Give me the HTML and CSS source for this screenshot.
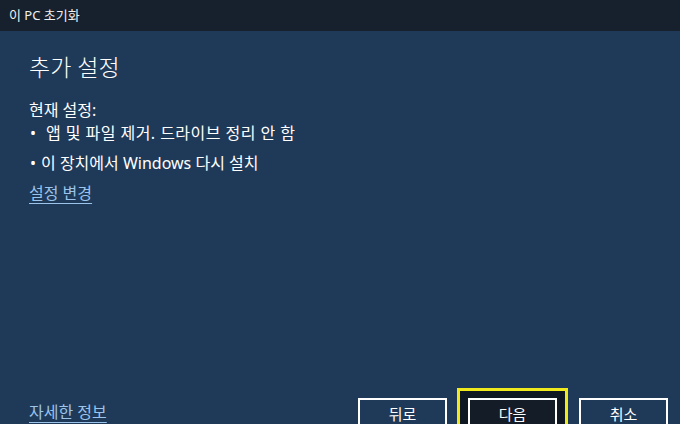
FILE: index.html
```html
<!DOCTYPE html>
<html lang="ko">
<head>
<meta charset="utf-8">
<title>이 PC 초기화</title>
<link rel="stylesheet" href="styles.css">
</head>
<body>
<div class="window">
  <div class="titlebar">이 PC 초기화</div>
  <div class="content">
    <h1 class="heading">추가 설정</h1>
    <p class="label">현재 설정:</p>
    <ul class="settings">
      <li class="item item-wide"><span class="dot">•</span><span>앱 및 파일 제거. 드라이브 정리 안 함</span></li>
      <li class="item"><span class="dot">•</span><span>이 장치에서 Windows 다시 설치</span></li>
    </ul>
    <a class="link change" href="#">설정 변경</a>
    <div class="spacer"></div>
    <div class="footer">
      <a class="link more" href="#">자세한 정보</a>
      <div class="buttons">
        <button class="btn">뒤로</button>
        <div class="focus"><button class="btn primary">다음</button></div>
        <button class="btn">취소</button>
      </div>
    </div>
  </div>
</div>
</body>
</html>
```

FILE: styles.css
```css
* { box-sizing: border-box; }
html, body { margin: 0; padding: 0; }
body {
  width: 680px;
  height: 424px;
  overflow: hidden;
  background: #1f3a59;
  font-family: "Noto Sans", "Noto Sans CJK KR", sans-serif;
  color: #ffffff;
}
.window {
  display: flex;
  flex-direction: column;
  height: 424px;
}
.titlebar {
  height: 31px;
  flex: none;
  background: #17212e;
  font-size: 13px;
  line-height: 31px;
  padding-left: 9px;
  color: #f0f0f0;
}
.content {
  flex: 1;
  display: flex;
  flex-direction: column;
  padding: 0 12px 0 29px;
  min-height: 0;
}
.heading {
  margin: 16px 0 0;
  font-size: 23px;
  font-weight: 300;
  line-height: 40px;
}
.label {
  margin: 13px 0 0;
  font-size: 16px;
  line-height: 20px;
}
.settings {
  list-style: none;
  margin: 0;
  padding: 0;
}
.item {
  font-size: 16px;
  line-height: 20px;
  margin-top: 10px;
  display: flex;
}
.item:first-child { margin-top: 3px; }
.dot { width: 12px; padding-left: 1px; }
.item-wide .dot { width: 17px; }
.item-wide span + span { letter-spacing: 0.45px; }
.link {
  color: #9cc3ea;
  font-size: 16px;
  line-height: 20px;
  text-decoration: underline;
  text-underline-offset: 4px;
  align-self: flex-start;
}
.change { margin-top: 10px; }
.spacer { flex: 1; }
.footer {
  flex: none;
  display: flex;
  align-items: flex-start;
  justify-content: space-between;
  height: 36px;
  overflow: visible;
}
.more { margin-top: 14px; }
.buttons {
  display: flex;
  align-items: flex-end;
}
.btn {
  width: 89px;
  height: 34px;
  background: #1f3a59;
  border: 2px solid #ffffff;
  color: #ffffff;
  font-family: "Noto Sans CJK KR", sans-serif;
  font-size: 15px;
  padding: 0 0 4px;
}
.focus {
  margin: 0 11px 0 10px;
  padding: 7px 8px 0;
  border: 3px solid #f0ea1c;
  border-bottom: none;
  background: #0f1822;
  display: flex;
}
.primary {
  background: #131c27;
}
```
